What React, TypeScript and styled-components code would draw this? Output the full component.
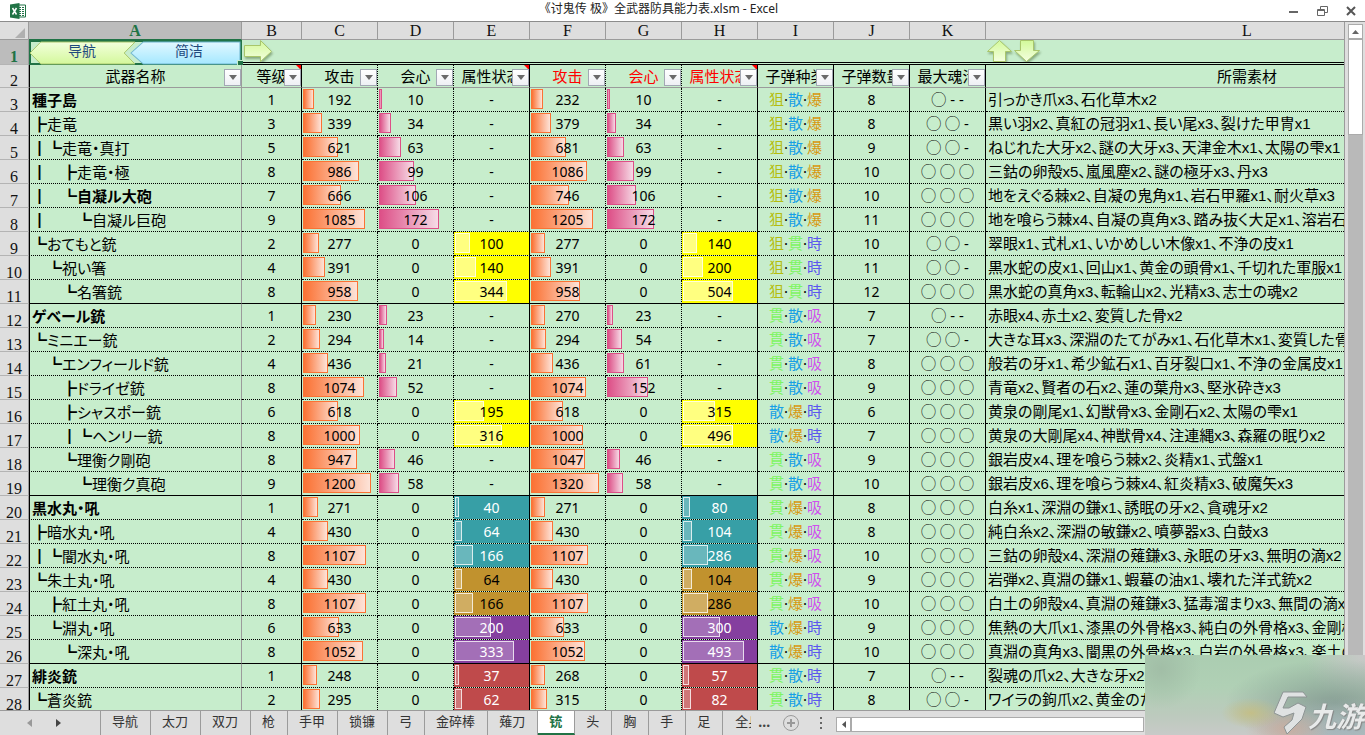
import React from "react";
import styled, { createGlobalStyle, css } from "styled-components";

const GREEN = "#c7edcc";
const CHROME = "#dedede";
const LINE = "#9b9b9b";
const ACCENT = "#217346";

const Global = createGlobalStyle`
  * { box-sizing: border-box; }
  html, body { margin: 0; height: 100%; overflow: hidden; }
  body { font-family: "Noto Sans", "Noto Sans CJK SC", sans-serif; font-size: 14px; color: #000; background: #fff; }
  button { font: inherit; color: inherit; margin: 0; padding: 0; border: 0; background: none; cursor: pointer; }
`;

const Workbook = styled.div`
  height: 100vh;
  display: flex;
  flex-direction: column;
  overflow: hidden;
  background: ${CHROME};
`;

const TitleBar = styled.header`
  flex: none;
  height: 22px;
  display: flex;
  align-items: center;
  background: #fff;
  border-bottom: 1px solid #8c8c8c;
`;
const AppIcon = styled.div`
  width: 24px;
  height: 20px;
  padding: 2px 0 0 10px;
  svg { display: block; overflow: visible; }
`;
const Title = styled.h1`
  flex: 1;
  margin: 0;
  padding: 0 0 3px 6px;
  text-align: center;
  font: 400 12px/18px "Noto Sans", "Noto Sans CJK SC", sans-serif;
  color: #222;
`;
const WindowButtons = styled.div`
  display: flex;
  width: 78px;
  justify-content: space-between;
  padding-right: 8px;
  button { width: 12px; height: 18px; display: flex; align-items: center; justify-content: center; }
`;

const Main = styled.main`
  flex: 1;
  min-height: 0;
  display: flex;
`;
const GridPane = styled.div`
  flex: 1;
  min-width: 0;
  overflow: hidden;
  border-right: 1px solid ${LINE};
`;
/* The last column runs on past the visible pane. */
const Sheet = styled.table`
  width: calc(100% + 164px);
  table-layout: fixed;
  border-collapse: separate;
  border-spacing: 0;
  th, td { padding: 0; font-weight: 400; overflow: hidden; white-space: nowrap; }
`;

const ColumnHead = styled.th<{ $selected?: boolean }>`
  height: 18px;
  background: ${(p) => (p.$selected ? "#bcbcbc" : CHROME)};
  border-right: 1px solid ${LINE};
  border-bottom: 1px solid ${(p) => (p.$selected ? ACCENT : LINE)};
  font: 400 16px/17px "Liberation Serif", serif;
  color: ${(p) => (p.$selected ? ACCENT : "#111")};
  ${(p) => p.$selected && css`&& { font-weight: 700; }`}
  &:last-child { border-right: 0; }
`;
const Corner = styled.th`
  height: 18px;
  border-right: 1px solid ${LINE};
  border-bottom: 1px solid ${LINE};
  background: ${CHROME};
  svg { display: block; margin: 4px 3px 0 auto; }
`;
const RowHead = styled.th<{ $selected?: boolean }>`
  && { padding-top: 10px; }
  border-right: 1px solid ${LINE};
  border-bottom: 1px solid #b4b4b4;
  background: ${(p) => (p.$selected ? "#bcbcbc" : CHROME)};
  font: 400 16px/12px "Liberation Serif", serif;
  color: ${(p) => (p.$selected ? ACCENT : "#111")};
  ${(p) => p.$selected && css`&& { font-weight: 700; }`}
`;

const NavCell = styled.td`
  height: 25px;
  background: ${GREEN};
  border-bottom: 3px double #000;
`;
const SelectedCell = styled(NavCell)`
  position: relative;
  &&& { overflow: visible; }
  border: 2px solid ${ACCENT};
  &::after {
    content: "";
    position: absolute;
    right: -3px;
    bottom: -3px;
    width: 5px;
    height: 5px;
    background: ${ACCENT};
    border: 1px solid ${GREEN};
    border-width: 1px 0 0 1px;
  }
`;
const Banners = styled.div`
  display: flex;
  height: 21px;
`;
const Banner = styled.button`
  position: relative;
  flex: 1;
  height: 21px;
  font: 14px/20px "Noto Sans CJK SC", sans-serif;
  color: #1f497d;
  && { padding-bottom: 5px; }
  &:last-child { padding-left: 5px; }
  svg { position: absolute; inset: 0; width: 100%; height: 22px; overflow: visible; }
  span { position: relative; display: block; height: 16px; line-height: 16px; }
`;
const ShapeRow = styled.div`
  display: flex;
  height: 22px;
  button { height: 22px; }
  svg { display: block; overflow: visible; filter: drop-shadow(1px 2px 1px rgba(60, 90, 40, 0.45)); }
`;

const edge = { none: "0", solid: "1px solid #000", dotted: "1px dotted #000", freeze: `1px solid ${LINE}` };
type Edge = keyof typeof edge;

const HeaderCell = styled.th<{ $edge: Edge; $red?: boolean; $first?: boolean }>`
  position: relative;
  height: 23px;
  background: ${GREEN};
  border-left: ${(p) => (p.$first ? "1px solid #000" : "0")};
  border-right: ${(p) => edge[p.$edge]};
  border-bottom: 1px solid ${LINE};
  font: 400 15px/22px "Noto Sans CJK SC", sans-serif;
  color: ${(p) => (p.$red ? "#f00" : "#000")};
`;
const FilterButton = styled.button`
  position: absolute;
  right: 0;
  bottom: 1px;
  width: 17px;
  height: 17px;
  display: flex;
  align-items: center;
  justify-content: center;
  && { background: linear-gradient(#fff, #eef0f4); border: 1px solid #a3a8b4; }
`;
const NoteMark = styled.span`
  position: absolute;
  top: 0;
  right: 0;
  border-top: 5px solid #f00;
  border-left: 5px solid transparent;
`;

const Cell = styled.td<{ $edge: Edge; $last?: boolean; $bg?: string; $fg?: string; $first?: boolean }>`
  height: 24px;
  background: ${(p) => p.$bg || GREEN};
  background-clip: padding-box;
  color: ${(p) => p.$fg || "#000"};
  border-left: ${(p) => (p.$first ? "1px solid #000" : "0")};
  border-right: ${(p) => edge[p.$edge]};
  border-bottom: 1px ${(p) => (p.$last ? "solid" : "dotted")} #000;
  text-align: center;
`;
const Body = styled.tbody`
  background: ${GREEN};
`;
const Japanese = styled.div<{ $bold?: boolean }>`
  height: 23px;
  overflow: hidden;
  padding-left: 2px;
  text-align: left;
  white-space: pre;
  font: ${(p) => (p.$bold ? 700 : 400)} 15px/23px "Liberation Sans", "Noto Sans CJK JP", sans-serif;
  font-feature-settings: "palt";
`;
const Tree = styled.span`
  font-family: "Noto Sans CJK JP", sans-serif;
  font-weight: 700;
`;
const Plain = styled.div`
  height: 23px;
  line-height: 23px;
  overflow: hidden;
`;
const Glyphs = styled(Plain)`
  font-size: 15px;
`;
const Stack = styled.div`
  display: grid;
  height: 23px;
  line-height: 23px;
  align-items: center;
  > * { grid-area: 1 / 1; }
`;
const barLook = {
  orange: css`background: linear-gradient(90deg, #fb7234, #fde3d8); border-color: #fb7234;`,
  pink: css`background: linear-gradient(90deg, #dd4f87, #f6dbe6); border-color: #dd4f87;`,
  glass: css`background: rgba(255, 255, 255, 0.25); border-color: rgba(255, 255, 255, 0.75);`,
  light: css`background: #ffff80; border-color: #ffffd8;`,
};
const Bar = styled.i<{ $look: keyof typeof barLook }>`
  height: 20px;
  margin: 0 0 1px 1px;
  border: 1px solid;
  ${(p) => barLook[p.$look]}
`;
const Value = styled.span`
  position: relative;
`;
const Ammo = styled.span<{ $c: string }>`
  color: ${(p) => p.$c};
`;

const ScrollColumn = styled.div`
  flex: none;
  width: 20px;
  padding: 2px 2px 0 3px;
  display: flex;
  flex-direction: column;
`;
const ArrowBox = styled.button`
  flex: none;
  width: 15px;
  height: 15px;
  display: flex;
  align-items: center;
  justify-content: center;
  && { background: #fff; border: 1px solid #ababab; }
`;
const Track = styled.div`
  flex: 1;
  background: #b9b9b9;
`;
const Thumb = styled.div`
  height: 96px;
  background: #fff;
  border: 1px solid #ababab;
`;

const TabBar = styled.nav`
  flex: none;
  height: 25px;
  display: flex;
  border-top: 1px solid ${LINE};
  background: ${CHROME};
`;
const TabArrows = styled.div`
  width: 101px;
  display: flex;
  align-items: center;
  gap: 24px;
  padding-left: 27px;
  border-right: 1px solid ${LINE};
  svg { display: block; }
`;
const Tab = styled.button<{ $active?: boolean; $cut?: boolean }>`
  flex: none;
  height: 24px;
  overflow: hidden;
  font: 400 13px/20px "Noto Sans CJK SC", sans-serif;
  && {
    padding: 0 ${(p) => (p.$cut ? 0 : 12)}px 4px ${(p) => (p.$cut ? 12 : 11)}px;
    width: ${(p) => (p.$cut ? "28px" : "auto")};
    border-right: ${(p) => (p.$cut ? 0 : 1)}px solid ${LINE};
    color: #333;
    text-align: left;
    white-space: nowrap;
  }
  ${(p) =>
    p.$active &&
    css`
      && {
        background: #fff;
        color: ${ACCENT};
        font-weight: 700;
        padding-bottom: 2px;
        border-bottom: 2px solid ${ACCENT};
      }
    `}
`;
const More = styled.button`
  width: 26px;
  && { padding-bottom: 4px; color: #444; font-weight: 700; }
`;
const AddSheet = styled.button`
  width: 28px;
  display: flex;
  align-items: center;
  justify-content: center;
`;
const Grip = styled.div`
  width: 31px;
  display: flex;
  align-items: center;
  justify-content: center;
`;
const HScroll = styled.div`
  flex: 1;
  display: flex;
  padding: 6px 221px 0 0;
`;
const HThumb = styled.div`
  flex: 1;
  height: 15px;
  background: #fff;
  border: 1px solid #ababab;
`;

const Watermark = styled.div`
  position: fixed;
  right: 0;
  bottom: 0;
  width: 220px;
  height: 80px;
  display: flex;
  align-items: flex-end;
  justify-content: flex-end;
  background:
    radial-gradient(ellipse at 106px 58px, rgba(200, 190, 125, 0.8), rgba(200, 190, 125, 0) 30px),
    radial-gradient(ellipse at 142px 74px, rgba(205, 170, 155, 0.8), rgba(205, 170, 155, 0) 42px),
    radial-gradient(ellipse 90px 34px at 200px 76px, rgba(165, 182, 188, 0.9), rgba(165, 182, 188, 0)),
    radial-gradient(ellipse 110px 44px at 190px 48px, rgba(125, 148, 140, 0.8), rgba(125, 148, 140, 0)),
    radial-gradient(circle at 16px 14px, rgba(160, 188, 165, 0.9), rgba(160, 188, 165, 0) 40px),
    radial-gradient(ellipse 60px 50px at 220px 0, rgba(200, 200, 200, 1), rgba(200, 200, 200, 0)),
    linear-gradient(#abcdb1 0%, #b0d0b5 40%, #bccabd 75%, #c8cac8 100%);
`;
const Brand = styled.span`
  width: 57px;
  padding-bottom: 3px;
  font: italic 700 28px/34px "Noto Sans CJK SC", sans-serif;
  color: #e8eaea;
  text-shadow: 0 0 1px #777, 1px 1px 1px #888;
  white-space: nowrap;
`;

type Row = {
  tree: string; name: string; bold?: boolean; lv: number;
  c: number; d: number; e?: number; f: number; g: number; h?: number;
  kind?: string; ammo: string; n: number; k: number; mat: string; last?: boolean;
};
const r = (tree: string, name: string, lv: number, c: number, d: number, e: number | undefined, f: number, g: number, h: number | undefined, ammo: string, n: number, k: number, mat: string, extra: Partial<Row> = {}): Row =>
  ({ tree, name, lv, c, d, e, f, g, h, ammo, n, k, mat, ...extra });
const no = undefined;
const Y = { kind: "yellow" }, T = { kind: "teal" }, O = { kind: "ochre" }, P = { kind: "purple" }, R = { kind: "red" };

const rows: Row[] = [
  r("", "種子島", 1, 192, 10, no, 232, 10, no, "狙散爆", 8, 1, "引っかき爪x3、石化草木x2", { bold: true }),
  r("┣", "走竜", 3, 339, 34, no, 379, 34, no, "狙散爆", 8, 2, "黒い羽x2、真紅の冠羽x1、長い尾x3、裂けた甲冑x1"),
  r("┃┗", "走竜・真打", 5, 621, 63, no, 681, 63, no, "狙散爆", 9, 2, "ねじれた大牙x2、謎の大牙x3、天津金木x1、太陽の雫x1"),
  r("┃　┣", "走竜・極", 8, 986, 99, no, 1086, 99, no, "狙散爆", 10, 3, "三鈷の卵殻x5、嵐風塵x2、謎の極牙x3、丹x3"),
  r("┃　┗", "自凝ル大砲", 7, 666, 106, no, 746, 106, no, "狙散爆", 10, 3, "地をえぐる棘x2、自凝の鬼角x1、岩石甲羅x1、耐火草x3", { bold: true }),
  r("┃　　┗", "自凝ル巨砲", 9, 1085, 172, no, 1205, 172, no, "狙散爆", 11, 3, "地を喰らう棘x4、自凝の真角x3、踏み抜く大足x1、溶岩石x4"),
  r("┗", "おてもと銃", 2, 277, 0, 100, 277, 0, 140, "狙貫時", 10, 2, "翠眼x1、式札x1、いかめしい木像x1、不浄の皮x1", Y),
  r("　┗", "祝い箸", 4, 391, 0, 140, 391, 0, 200, "狙貫時", 11, 2, "黒水蛇の皮x1、回山x1、黄金の頭骨x1、千切れた軍服x1", Y),
  r("　　┗", "名箸銃", 8, 958, 0, 344, 958, 0, 504, "狙貫時", 12, 3, "黒水蛇の真角x3、転輪山x2、光精x3、志士の魂x2", { ...Y, last: true }),
  r("", "ゲベール銃", 1, 230, 23, no, 270, 23, no, "貫散吸", 7, 1, "赤眼x4、赤土x2、変質した骨x2", { bold: true }),
  r("┗", "ミニエー銃", 2, 294, 14, no, 294, 54, no, "貫散吸", 7, 2, "大きな耳x3、深淵のたてがみx1、石化草木x1、変質した骨x1"),
  r("　┗", "エンフィールド銃", 4, 436, 21, no, 436, 61, no, "貫散吸", 8, 3, "般若の牙x1、希少鉱石x1、百牙裂口x1、不浄の金属皮x1"),
  r("　　┣", "ドライゼ銃", 8, 1074, 52, no, 1074, 152, no, "貫散吸", 9, 3, "青竜x2、賢者の石x2、蓮の葉舟x3、堅氷砕きx3"),
  r("　　┣", "シャスポー銃", 6, 618, 0, 195, 618, 0, 315, "散爆時", 6, 3, "黄泉の剛尾x1、幻獣骨x3、金剛石x2、太陽の雫x1", Y),
  r("　　┃┗", "ヘンリー銃", 8, 1000, 0, 316, 1000, 0, 496, "散爆時", 7, 3, "黄泉の大剛尾x4、神獣骨x4、注連縄x3、森羅の眠りx2", Y),
  r("　　┗", "理衡ク剛砲", 8, 947, 46, no, 1047, 46, no, "貫散吸", 9, 3, "銀岩皮x4、理を喰らう棘x2、炎精x1、式盤x1"),
  r("　　　┗", "理衡ク真砲", 9, 1200, 58, no, 1320, 58, no, "貫散吸", 10, 3, "銀岩皮x6、理を喰らう棘x4、紅炎精x3、破魔矢x3", { last: true }),
  r("", "黒水丸・吼", 1, 271, 0, 40, 271, 0, 80, "貫爆吸", 8, 3, "白糸x1、深淵の鎌x1、誘眠の牙x2、貪魂牙x2", { ...T, bold: true }),
  r("┣", "暗水丸・吼", 4, 430, 0, 64, 430, 0, 104, "貫爆吸", 8, 3, "純白糸x2、深淵の敏鎌x2、噴夢器x3、白鼓x3", T),
  r("┃┗", "闇水丸・吼", 8, 1107, 0, 166, 1107, 0, 286, "貫爆吸", 10, 3, "三鈷の卵殻x4、深淵の薙鎌x3、永眠の牙x3、無明の滴x2", T),
  r("┗", "朱土丸・吼", 4, 430, 0, 64, 430, 0, 104, "貫爆吸", 9, 3, "岩弾x2、真淵の鎌x1、蝦蟇の油x1、壊れた洋式銃x2", O),
  r("　┣", "紅土丸・吼", 8, 1107, 0, 166, 1107, 0, 286, "貫爆吸", 10, 3, "白土の卵殻x4、真淵の薙鎌x3、猛毒溜まりx3、無間の滴x2", O),
  r("　┗", "淵丸・吼", 6, 633, 0, 200, 633, 0, 300, "散爆時", 9, 3, "焦熱の大爪x1、漆黒の外骨格x3、純白の外骨格x3、金剛棒x1", P),
  r("　　┗", "深丸・吼", 8, 1052, 0, 333, 1052, 0, 493, "散爆時", 10, 3, "真淵の真角x3、闇黒の外骨格x3、白岩の外骨格x3、楽土の滴x2", { ...P, last: true }),
  r("", "緋炎銃", 1, 248, 0, 37, 268, 0, 57, "貫散時", 7, 1, "裂魂の爪x2、大きな牙x2、石化草木x2", { ...R, bold: true }),
  r("┗", "蒼炎銃", 2, 295, 0, 62, 315, 0, 82, "貫散時", 8, 2, "ワイラの鉤爪x2、黄金のたてがみx1、変質した骨x1", R),
];

const ammoColor: Record<string, string> = {
  狙: "#b4bd10", 散: "#169fe6", 爆: "#d8980f", 貫: "#7ef562", 時: "#5c58ee", 吸: "#cf50ee",
};
const kinds: Record<string, { bg: string; fg: string; look: keyof typeof barLook; e: number; h: number }> = {
  yellow: { bg: "#ffff00", fg: "#000", look: "light", e: 0.15, h: 0.1 },
  teal: { bg: "#379fa6", fg: "#fff", look: "glass", e: 0.108, h: 0.0875 },
  ochre: { bg: "#c1922e", fg: "#000", look: "glass", e: 0.108, h: 0.0875 },
  purple: { bg: "#853f9f", fg: "#fff", look: "glass", e: 0.178, h: 0.1235 },
  red: { bg: "#bf4a4b", fg: "#fff", look: "glass", e: 0.108, h: 0.1 },
};
const souls = ["", "◯ - -", "◯ ◯ -", "◯ ◯ ◯"];

const BarValue = ({ v, scale, look }: { v: number; scale: number; look: keyof typeof barLook }) => (
  <Stack>
    {v > 0 && <Bar $look={look} style={{ width: Math.max(3, Math.round(v * scale)) }} />}
    <Value>{v}</Value>
  </Stack>
);

const StatusCell = ({ v, kind, side, last }: { v?: number; kind?: string; side: "e" | "h"; last?: boolean }) => {
  const k = kind ? kinds[kind] : undefined;
  return (
    <Cell $edge="solid" $last={last} $bg={k?.bg} $fg={k?.fg}>
      {k && v ? <BarValue v={v} scale={k[side]} look={k.look} /> : <Plain>-</Plain>}
    </Cell>
  );
};

const Filter = ({ label }: { label: string }) => (
  <FilterButton aria-label={`${label} 筛选`}>
    <svg width="8" height="5"><path d="M0 0h8L4 5z" fill="#6a6a6a" /></svg>
  </FilterButton>
);

const headers: { t: string; edge: Edge; red?: boolean; note?: boolean }[] = [
  { t: "武器名称", edge: "freeze" },
  { t: "等级", edge: "solid", note: true },
  { t: "攻击", edge: "dotted" },
  { t: "会心", edge: "dotted" },
  { t: "属性状态", edge: "solid", note: true },
  { t: "攻击", edge: "dotted", red: true },
  { t: "会心", edge: "dotted", red: true },
  { t: "属性状态", edge: "solid", red: true, note: true },
  { t: "子弹种类", edge: "solid" },
  { t: "子弹数量", edge: "solid" },
  { t: "最大魂活", edge: "solid" },
];

const tabs = ["导航", "太刀", "双刀", "枪", "手甲", "锁镰", "弓", "金碎棒", "薙刀", "铳", "头", "胸", "手", "足"];

const BlockArrow = ({ d, label, w }: { d: string; label: string; w: number }) => (
  <button aria-label={label}>
    <svg width={w} height="22">
      <path d={d} fill="url(#lime)" stroke="#a9c66b" />
    </svg>
  </button>
);

export default function App() {
  return (
    <Workbook>
      <Global />
      <TitleBar>
        <AppIcon>
          <svg width="16" height="16" viewBox="0 0 16 16">
            <path d="M8 2h7.500v12H8z" fill="#fff" stroke="#217346" />
            <path d="M9 4.500h2M12 4.500h2M9 6.500h2M12 6.500h2M9 8.500h2M12 8.500h2M9 10.500h2M12 10.500h2M9 12.500h2M12 12.500h2" stroke="#217346" />
            <path d="M0 1.500 9.500 0v16L0 14.500z" fill="#217346" />
            <path d="m2.500 5 4 6.500M6.500 5l-4 6.500" stroke="#fff" strokeWidth="1.500" />
          </svg>
        </AppIcon>
        <Title>《讨鬼传 极》全武器防具能力表.xlsm - Excel</Title>
        <WindowButtons>
          <button aria-label="最小化"><svg width="10" height="10"><path d="M1 6h9" stroke="#666" strokeWidth="2" /></svg></button>
          <button aria-label="还原"><svg width="11" height="10"><path d="M3.500 3V.5h7v6H8M.5 3.500h7v6h-7zM.5 4.500h7" fill="none" stroke="#666" /></svg></button>
          <button aria-label="关闭"><svg width="10" height="10"><path d="m1 1 8 8M9 1 1 9" stroke="#555" strokeWidth="2" /></svg></button>
        </WindowButtons>
      </TitleBar>
      <Main>
        <GridPane>
          <Sheet>
            <colgroup>
              <col style={{ width: 29 }} />
              <col style={{ width: 213 }} />
              <col style={{ width: 60 }} />
              {"CDEFGHIJK".split("").map((c) => <col key={c} style={{ width: 76 }} />)}
              <col />
            </colgroup>
            <thead>
              <tr>
                <Corner><svg width="10" height="10"><path d="M10 0v10H0z" fill="#b0b0b0" /></svg></Corner>
                {"ABCDEFGHIJKL".split("").map((c) => <ColumnHead key={c} $selected={c === "A"}>{c}</ColumnHead>)}
              </tr>
              <tr>
                <RowHead $selected>1</RowHead>
                <SelectedCell>
                  <Banners>
                    <Banner>
                      <svg viewBox="0 0 104 22" preserveAspectRatio="none">
                        <defs>
                          <linearGradient id="lime" x2="0" y2="1"><stop stopColor="#d3f99a" /><stop offset="1" stopColor="#f4ffe0" /></linearGradient>
                          <linearGradient id="lime2" x2="0" y2="1"><stop stopColor="#f2ffdc" /><stop offset="1" stopColor="#d4f89c" /></linearGradient>
                          <linearGradient id="sky" x2="0" y2="1"><stop stopColor="#e2f8ff" /><stop offset="1" stopColor="#a5e8ff" /></linearGradient>
                        </defs>
                        <path d="M-1 11 10 0h96L95 11l11 11H10z" fill="url(#lime2)" stroke="#a9c66b" />
                      </svg>
                      <span>导航</span>
                    </Banner>
                    <Banner>
                      <svg viewBox="0 0 104 22" preserveAspectRatio="none">
                        <path d="M-2 11 10 0h94v22H10z" fill="url(#sky)" stroke="#6fb5cf" />
                      </svg>
                      <span>简洁</span>
                    </Banner>
                  </Banners>
                </SelectedCell>
                <NavCell colSpan={10}>
                  <ShapeRow><BlockArrow label="向右" w={32} d="M2.500 5.500h16v-5l11 11-11 10v-5h-16z" /></ShapeRow>
                </NavCell>
                <NavCell>
                  <ShapeRow>
                    <BlockArrow label="向上" w={27} d="M13.500.5l12 11h-6v10h-12v-10h-6z" />
                    <BlockArrow label="向下" w={28} d="M13.500 21.500l13-11h-6V.5h-13v10h-6z" />
                  </ShapeRow>
                </NavCell>
              </tr>
              <tr>
                <RowHead>2</RowHead>
                {headers.map((h, i) => (
                  <HeaderCell key={i} $edge={h.edge} $red={h.red} $first={i === 0}>
                    {h.t}
                    {h.note && <NoteMark />}
                    <Filter label={h.t} />
                  </HeaderCell>
                ))}
                <HeaderCell $edge="none">所需素材</HeaderCell>
              </tr>
            </thead>
            <Body>
              {rows.map((w, i) => (
                <tr key={i}>
                  <RowHead>{i + 3}</RowHead>
                  <Cell $edge="freeze" $last={w.last} $first>
                    <Japanese $bold={w.bold}><Tree>{w.tree}</Tree>{w.name}</Japanese>
                  </Cell>
                  <Cell $edge="solid" $last={w.last}><Plain>{w.lv}</Plain></Cell>
                  <Cell $edge="dotted" $last={w.last}><BarValue v={w.c} scale={0.057} look="orange" /></Cell>
                  <Cell $edge="dotted" $last={w.last}><BarValue v={w.d} scale={0.349} look="pink" /></Cell>
                  <StatusCell v={w.e} kind={w.kind} side="e" last={w.last} />
                  <Cell $edge="dotted" $last={w.last}><BarValue v={w.f} scale={0.0515} look="orange" /></Cell>
                  <Cell $edge="dotted" $last={w.last}><BarValue v={w.g} scale={0.273} look="pink" /></Cell>
                  <StatusCell v={w.h} kind={w.kind} side="h" last={w.last} />
                  <Cell $edge="solid" $last={w.last}>
                    <Glyphs>
                      {w.ammo.split("").map((a, j) => (
                        <React.Fragment key={a}>{j > 0 && "·"}<Ammo $c={ammoColor[a]}>{a}</Ammo></React.Fragment>
                      ))}
                    </Glyphs>
                  </Cell>
                  <Cell $edge="solid" $last={w.last}><Plain>{w.n}</Plain></Cell>
                  <Cell $edge="solid" $last={w.last}><Glyphs>{souls[w.k]}</Glyphs></Cell>
                  <Cell $edge="none" $last={w.last}><Japanese>{w.mat}</Japanese></Cell>
                </tr>
              ))}
            </Body>
          </Sheet>
        </GridPane>
        <ScrollColumn>
          <ArrowBox aria-label="向上滚动"><svg width="7" height="4"><path d="M0 4h7L3.500 0z" fill="#666" /></svg></ArrowBox>
          <Track><Thumb /></Track>
        </ScrollColumn>
      </Main>
      <TabBar>
        <TabArrows>
          <button aria-label="上一个"><svg width="5" height="8"><path d="M5 0v8L0 4z" fill="#999" /></svg></button>
          <button aria-label="下一个"><svg width="5" height="8"><path d="M0 0v8l5-4z" fill="#444" /></svg></button>
        </TabArrows>
        {tabs.map((t) => <Tab key={t} $active={t === "铳"}>{t}</Tab>)}
        <Tab $cut>全身</Tab>
        <More aria-label="更多工作表">...</More>
        <AddSheet aria-label="新工作表">
          <svg width="16" height="16"><circle cx="8" cy="8" r="7.500" fill="none" stroke="#9a9a9a" /><path d="M8 4v8M4 8h8" stroke="#999" strokeWidth="2" /></svg>
        </AddSheet>
        <Grip><svg width="2" height="12"><path d="M0 1h2M0 6h2M0 11h2" stroke="#666" strokeWidth="2" /></svg></Grip>
        <HScroll>
          <ArrowBox aria-label="向左滚动"><svg width="4" height="7"><path d="M4 0v7L0 3.500z" fill="#555" /></svg></ArrowBox>
          <HThumb />
        </HScroll>
      </TabBar>
      <Watermark>
        <svg width="34" height="44" viewBox="0 0 34 44">
          <path d="M9 1h20l4 5H14L9 17h6l9-5 8 4-4 12-15 15-3-7 8-7 2-7-11 4-9-4z" fill="#dfe2e2" stroke="#8d9494" />
        </svg>
        <Brand>九游</Brand>
      </Watermark>
    </Workbook>
  );
}
